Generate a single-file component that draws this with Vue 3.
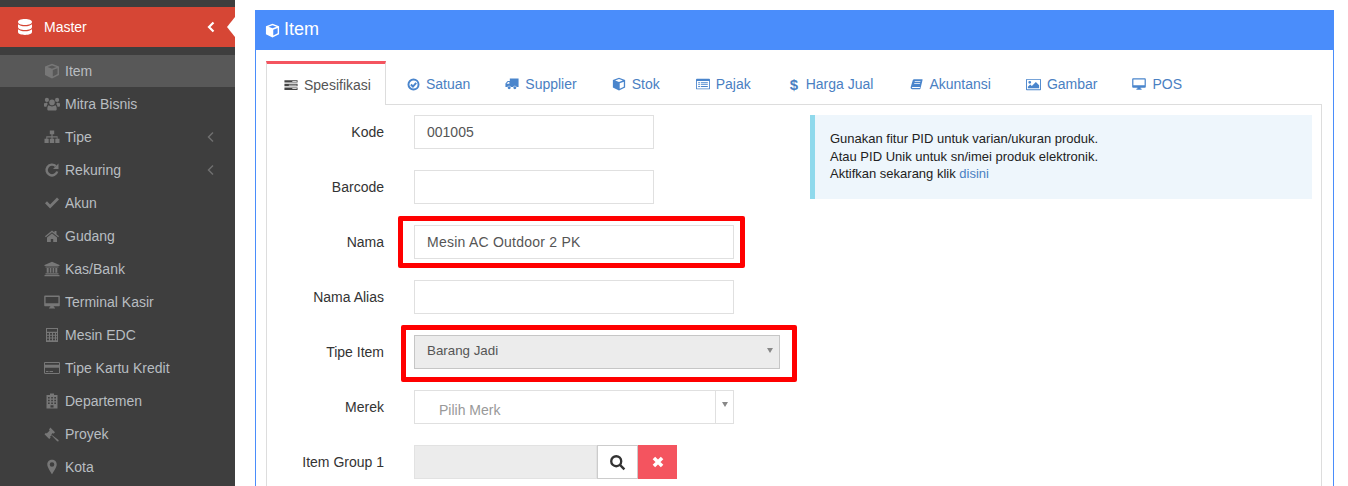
<script setup>
const icons = {
  database: { d: 'M8 .8C4.400.8 1.800 1.800 1.800 3.100S4.400 5.500 8 5.500s6.200-1.100 6.200-2.400S11.600.8 8 .8zM1.800 5v2.200C1.800 8.500 4.400 9.600 8 9.600s6.200-1.100 6.200-2.400V5C13 6 10.700 6.600 8 6.600S3 6 1.800 5zM1.800 9v2.200c0 1.300 2.600 2.300 6.200 2.300s6.200-1 6.200-2.300V9C13 10 10.700 10.600 8 10.600S3 10 1.800 9z' },
  cube: { d: 'M8 .8 15 3.400V12L8 15.400 1 12V3.400zM8 2.400 3.600 4 8 5.700 12.400 4zM8.800 7.100v6.300L13.500 11V5.300z' },
  users: { d: 'M8 3.600a2.800 2.800 0 1 0 0 5.600 2.800 2.800 0 0 0 0-5.600zM2.900 1.800a2.100 2.100 0 1 0 0 4.200 2.100 2.100 0 0 0 0-4.200zM13.100 1.800a2.100 2.100 0 1 0 0 4.200 2.100 2.100 0 0 0 0-4.200zM4.800 9.300C3.800 9.800 3.300 11 3.300 13c0 1 .6 1.500 1.500 1.500h6.400c.9 0 1.500-.5 1.500-1.500 0-2-.5-3.200-1.500-3.700-.9.800-2 1.100-3.200 1.100s-2.300-.3-3.200-1.100zM0 7.200v2.500c0 .7.500 1.100 1.200 1.100h1.300c.1-1.200.6-2.300 1.300-2.800-.4-.4-.7-.9-.9-1.500-.8.600-2.000.6-2.900.7zM16 7.200v2.500c0 .7-.5 1.100-1.200 1.100h-1.300c-.1-1.200-.6-2.300-1.300-2.800.4-.4.7-.9.900-1.500.8.600 2 .6 2.900.7z' },
  sitemap: { d: 'M5.800 1.500h4.400v3.800H8.600v2h5v2.400H15.500V14h-4.200V9.700h1.400V8.500H8.600v1.200H10.200V14H5.800V9.700H7.400V8.500H3.300v1.200H4.700V14H.5V9.700H2.300V7.300H7.400v-2H5.800z' },
  check: { d: 'M1 8.300 3 6.300 6.100 9.400 13 2.600 15 4.600 6.100 13.500z' },
  home: { d: 'M8 2.500 1 8.300l.8 1L8 4.200l6.200 5.100.8-1-2.500-2.100V3h-2v1.500zM3 9.500V14h3.800v-3h2.400v3H13V9.500L8 5.400z' },
  bank: { d: 'M8 .8 15.500 4v1H.5V4zM1.500 5.600h13v.9h-13zM2.700 7h2v4.800h-2zM5.800 7h1.600v4.800H5.800zM8.600 7h1.600v4.800H8.600zM11.300 7h2v4.800h-2zM1.500 12.300h13v1.100h-13zM.5 13.900h15v1.300H.5z' },
  desktop: { d: 'M1.200 1.500h13.600c.6 0 1 .4 1 1v8.700c0 .6-.4 1-1 1H9.700l.3 1.300h1v1H5v-1h1l.3-1.300H1.200c-.6 0-1-.4-1-1V2.500c0-.6.4-1 1-1zm.4 1.400v6.400h12.800V2.900z' },
  calc: { d: 'M2 1h12v14H2zM3 2v2.800h10V2zM3 6v1.700h2V6zm3 0v1.700h2V6zm3 0v1.700h2V6zm3 0v1.700h1V6zM3 8.800v1.700h2V8.800zm3 0v1.700h2V8.800zm3 0v1.700h2V8.800zm3 0v1.700h1V8.800zM3 11.600v1.700h2v-1.700zm3 0v1.700h2v-1.700zm3 0v1.700h2v-1.700zm3 0v1.700h1v-1.700z' },
  card: { d: 'M1.200 2h13.600c.7 0 1.200.5 1.200 1.200v9.600c0 .7-.5 1.200-1.200 1.200H1.200C.5 14 0 13.500 0 12.800V3.200C0 2.500.5 2 1.200 2zM1 4.800h14V3.200c0-.1 0-.2-.2-.2H1.200c-.2 0-.2.100-.2.200zM1 7.800v5c0 .1 0 .2.2.2h13.600c.2 0 .2-.1.2-.2v-5zM2 11h2.500v1H2zM5.500 11H9v1H5.500z' },
  building: { d: 'M6 .6h4v1.500h3.500V15.500H2.500V2.100H6zM4 4v1.500h1.700V4zM7.200 4v1.500h1.700V4zM10.300 4v1.500H12V4zM4 6.800v1.500h1.700V6.800zM7.200 6.800v1.500h1.700V6.800zM10.300 6.800v1.500H12V6.800zM4 9.600v1.500h1.700V9.600zM7.200 9.600v1.500h1.700V9.600zM10.300 9.600v1.500H12V9.600zM6.500 12.300v2.300h3v-2.300z' },
  gavel: { d: 'M6.300 1.500 11 6.200l-1.500 1.500-.7-.7L7.300 8.500l6.900 5.200c.6.500.6 1.200.2 1.600-.4.400-1.100.3-1.500-.2L7.500 9.200 6 10.700l.7.700-1.500 1.500L.5 8.200 2 6.700l.7.7 3-3-.7-.7z' },
  marker: { d: 'M8 .7C5.200.7 3.300 2.800 3.300 5.400 3.300 8.200 6.800 13 8 15.300 9.200 13 12.700 8.200 12.700 5.400 12.700 2.800 10.800.7 8 .7zM8 3.200a2.300 2.300 0 1 1 0 4.600 2.300 2.300 0 0 1 0-4.600z' },
  server: { d: 'M.5 2.500h15v2.700H.5zM9.500 3.400v.9h5v-.9zM.5 6.700h15v2.700H.5zM5.500 7.600v.9h9v-.9zM.5 10.900h15v2.700H.5zM9.500 11.800v.9h5v-.9z' },
  truck: { d: 'M5.500 1.800h10v9.700h-2.300a2 2 0 0 0-3.900 0H6.700a2 2 0 0 0-3.900 0H.5V7.300L3 4.700h2.500zM1.800 7.700h3.200V5.800H3.500zM4.750 10.500a1.700 1.700 0 1 1 0 3.400 1.700 1.700 0 0 1 0-3.400zM11.250 10.500a1.700 1.700 0 1 1 0 3.400 1.700 1.700 0 0 1 0-3.400z' },
  list: { d: 'M1 2h14c.6 0 1 .4 1 1v10c0 .6-.4 1-1 1H1c-.6 0-1-.4-1-1V3c0-.6.4-1 1-1zm0 2.500V13h14V4.500zM2.500 6h2v1h-2zM5.500 6h8v1h-8zM2.500 8.200h2v1h-2zM5.500 8.200h8v1h-8zM2.500 10.400h2v1h-2zM5.500 10.400h8v1h-8z' },
  book: { d: 'M5 1.500h10c.4 0 .6.4.5.800L13 12.500c-.2.7-.6 1.200-1.500 1.200H2.600C1.500 13.700.5 13 .8 11.500L3.500 2.500C3.700 1.900 4.300 1.500 5 1.500zM5.800 4v1h7V4zM5.200 6.200v1h7v-1zM3 11c-.7 0-.8 1.400.1 1.400h8.600c.4 0 .6-.2.7-.6l.2-.8z' },
  image: { d: 'M.8 2h14.400c.4 0 .8.400.8.800v10.400c0 .4-.4.800-.8.800H.8c-.4 0-.8-.4-.8-.8V2.800C0 2.400.4 2 .8 2zM1 3v10h14V3zM4 4.200a1.500 1.500 0 1 1 0 3 1.500 1.500 0 0 1 0-3zM2 12V10.500L4.500 8l1.700 1.700 4.300-4.500 3.500 3.500V12z' },
}

const menu = [
  { label: 'Item', icon: 'cube', active: true },
  { label: 'Mitra Bisnis', icon: 'users' },
  { label: 'Tipe', icon: 'sitemap', arrow: true },
  { label: 'Rekuring', icon: 'repeat', arrow: true },
  { label: 'Akun', icon: 'check' },
  { label: 'Gudang', icon: 'home' },
  { label: 'Kas/Bank', icon: 'bank' },
  { label: 'Terminal Kasir', icon: 'desktop' },
  { label: 'Mesin EDC', icon: 'calc' },
  { label: 'Tipe Kartu Kredit', icon: 'card' },
  { label: 'Departemen', icon: 'building' },
  { label: 'Proyek', icon: 'gavel' },
  { label: 'Kota', icon: 'marker' },
]

const tabs = [
  { label: 'Spesifikasi', icon: 'server', w: 14, ml: 0, active: true },
  { label: 'Satuan', icon: 'circleCheck', w: 13, ml: 0 },
  { label: 'Supplier', icon: 'truck', w: 14, ml: -1 },
  { label: 'Stok', icon: 'cube', w: 14, ml: -1 },
  { label: 'Pajak', icon: 'list', w: 14, ml: 0 },
  { label: 'Harga Jual', icon: 'dollar', w: 10, ml: 3 },
  { label: 'Akuntansi', icon: 'book', w: 13, ml: 1 },
  { label: 'Gambar', icon: 'image', w: 15, ml: -1 },
  { label: 'POS', icon: 'desktop', w: 14, ml: -1 },
]
</script>

<template>
  <div class="page">
    <aside class="sidebar">
      <div class="master">
        <svg class="master-icon" viewBox="1.800 0.800 12.400 12.700" width="14" height="16" preserveAspectRatio="none"><path :d="icons.database.d" fill-rule="evenodd" /></svg>
        <span class="master-label">Master</span>
        <svg class="chev chev-white" viewBox="0 0 8 12" width="8" height="12"><path d="M6.500 1.500 2 6l4.500 4.500" /></svg>
        <span class="notch"></span>
      </div>
      <ul class="menu">
        <li v-for="m in menu" :key="m.label" class="menu-row" :class="{ active: m.active }">
          <span class="menu-icon">
            <svg v-if="m.icon === 'repeat'" viewBox="0 0 16 16" width="16" height="16">
              <path class="ln" d="M13.200 9.500A5.400 5.400 0 1 1 11.800 4.200" />
              <path class="fl" d="M14.500 1.500V7H9z" />
            </svg>
            <svg v-else viewBox="0 0 16 16" width="16" height="16"><path class="fl" :d="icons[m.icon].d" fill-rule="evenodd" /></svg>
          </span>
          <span class="menu-label">{{ m.label }}</span>
          <svg v-if="m.arrow" class="chev chev-grey" viewBox="0 0 8 12" width="8" height="12"><path d="M6 1.500 1.500 6 6 10.500" /></svg>
        </li>
      </ul>
    </aside>

    <main class="main">
      <section class="panel">
        <header class="panel-head">
          <svg viewBox="0 0 16 16" width="15" height="15"><path :d="icons.cube.d" fill-rule="evenodd" /></svg>
          <h1>Item</h1>
        </header>
        <div class="panel-body">
          <nav class="tabs">
            <div v-for="t in tabs" :key="t.label" class="tab" :class="{ active: t.active }" :style="{ marginLeft: t.ml + 'px' }">
              <span v-if="t.icon === 'dollar'" class="dollar">$</span>
              <svg v-else-if="t.icon === 'circleCheck'" viewBox="0 0 16 16" :width="t.w" :height="t.w">
                <circle class="ln" cx="8" cy="8" r="6.200" />
                <path class="ln" d="M4.800 8 7.300 10.500 11.300 6" />
              </svg>
              <svg v-else viewBox="0 0 16 16" :width="t.w" :height="t.w"><path class="fl" :d="icons[t.icon].d" fill-rule="evenodd" /></svg>
              <span>{{ t.label }}</span>
            </div>
          </nav>
          <div class="tab-content">
            <form class="form">
              <div class="row">
                <label>Kode</label>
                <div class="field w240">001005</div>
              </div>
              <div class="row">
                <label>Barcode</label>
                <div class="field w240"></div>
              </div>
              <div class="row">
                <label>Nama</label>
                <div class="field w320 wide-text">Mesin AC Outdoor 2 PK</div>
                <span class="mark mark-nama"></span>
              </div>
              <div class="row">
                <label>Nama Alias</label>
                <div class="field w320"></div>
              </div>
              <div class="row">
                <label>Tipe Item</label>
                <div class="field select">
                  <span>Barang Jadi</span>
                  <i class="caret"></i>
                </div>
                <span class="mark mark-tipe"></span>
              </div>
              <div class="row">
                <label>Merek</label>
                <div class="field w320 combo">
                  <span class="placeholder">Pilih Merk</span>
                  <span class="combo-btn"><i class="caret"></i></span>
                </div>
              </div>
              <div class="row">
                <label>Item Group 1</label>
                <div class="group">
                  <div class="group-input"></div>
                  <button type="button" class="btn-search">
                    <svg viewBox="0 0 16 16" width="17" height="17"><circle cx="6.800" cy="6.800" r="4.700" /><path d="M10.300 10.300 14.500 14.500" /></svg>
                  </button>
                  <button type="button" class="btn-clear">
                    <svg viewBox="0 0 12 12" width="14" height="14"><path d="M2.500 2.500l7 7M9.500 2.500l-7 7" /></svg>
                  </button>
                </div>
              </div>
            </form>
            <aside class="info">
              <p>Gunakan fitur PID untuk varian/ukuran produk.</p>
              <p>Atau PID Unik untuk sn/imei produk elektronik.</p>
              <p>Aktifkan sekarang klik <a>disini</a></p>
            </aside>
          </div>
        </div>
      </section>
    </main>
  </div>
</template>

<style>
html, body { margin: 0; overflow: hidden; background: #fff; }
</style>

<style scoped>
* { box-sizing: border-box; }
.page {
  display: flex;
  width: 1348px;
  height: 486px;
  overflow: hidden;
  font-family: "Liberation Sans", Arial, sans-serif;
  font-size: 14px;
  color: #333;
}

/* sidebar */
.sidebar {
  flex: 0 0 235px;
  background: #3e3e3e;
  padding-top: 7px;
}
.master {
  position: relative;
  display: flex;
  align-items: center;
  height: 40px;
  padding-left: 18px;
  background: #d64635;
  color: #fff;
}
.master-icon { fill: #fff; }
.master-label { margin-left: 12px; }
.chev { margin-left: auto; fill: none; }
.chev-white { margin-right: 20px; stroke: #fff; stroke-width: 2.200; }
.chev-grey { margin-right: 20px; stroke: #6f6f6f; stroke-width: 1.500; }
.notch {
  position: absolute;
  right: 0;
  top: 10px;
  border-style: solid;
  border-width: 10px 8px 10px 0;
  border-color: transparent #fff transparent transparent;
}
.menu { list-style: none; margin: 8px 0 0; padding: 0; }
.menu-row {
  display: flex;
  align-items: center;
  height: 32px;
  margin-bottom: 1px;
  padding-left: 44px;
  color: #b8bdc1;
}
.menu-row.active { background: #585858; }
.menu-icon {
  display: flex;
  align-items: center;
  justify-content: center;
  width: 16px;
  margin-right: 5px;
}
.menu-icon .fl { fill: #777; }
.menu-icon .ln { fill: none; stroke: #777; stroke-width: 2.400; }

/* panel */
.main { flex: 1; padding: 10px 14px 0 20px; min-width: 0; }
.panel {
  height: 520px;
  border: 1px solid #4a8dfb;
  border-top: 0;
  border-bottom: 0;
}
.panel-head {
  display: flex;
  align-items: center;
  height: 40px;
  margin: 0 -1px;
  padding: 0 0 2px 10px;
  background: #4a8dfb;
  color: #fff;
}
.panel-head svg { fill: #fff; margin-top: 3px; margin-right: 4px; }
.panel-head h1 { margin: 0; font-size: 18px; font-weight: 400; }
.panel-body { padding: 11px 11px 0 10px; }

/* tabs */
.tabs { display: flex; height: 43px; }
.tab {
  display: flex;
  align-items: center;
  gap: 6px;
  height: 43px;
  padding: 3px 18px 0;
  color: #4a80c2;
}
.tab .fl { fill: #4a85cc; }
.tab .ln { fill: none; stroke: #4a85cc; stroke-width: 2.400; }
.tab.active {
  position: relative;
  z-index: 1;
  height: 44px;
  margin-right: 3px;
  padding: 0 14px 0 17px;
  background: #fff;
  color: #555;
  border: 1px solid #ddd;
  border-top: 3px solid #f4545f;
  border-bottom: 0;
}
.tab.active .fl { fill: #444; }
.dollar { width: 10px; font-weight: 700; font-size: 15px; }
.tab-content {
  display: flex;
  height: 400px;
  padding-top: 10px;
  border: 1px solid #ddd;
}

/* form */
.form { flex: 0 0 543px; }
.row {
  position: relative;
  display: flex;
  align-items: center;
  height: 34px;
  margin-bottom: 21px;
}
.row label {
  flex: 0 0 117px;
  margin-right: 30px;
  text-align: right;
  color: #333;
}
.field {
  height: 34px;
  padding: 0 12px;
  border: 1px solid #e0e0e0;
  background: #fff;
  line-height: 32px;
  color: #555;
}
.wide-text { letter-spacing: .24px; }
.w240 { width: 240px; }
.w320 { width: 320px; }
.select {
  display: flex;
  align-items: center;
  justify-content: space-between;
  width: 366px;
  padding-right: 6px;
  background: #ececec;
  border-color: #c6c6c6;
  font-size: 13.330px;
  line-height: 30px;
}
.select span { margin-top: -3px; }
.caret {
  display: inline-block;
  border-style: solid;
  border-width: 5px 3.500px 0;
  border-color: #888 transparent transparent;
}
.select .caret { margin-top: -4px; }
.combo {
  position: relative;
  padding: 0 0 0 24px;
  display: flex;
  justify-content: space-between;
}
.placeholder { color: #999; margin-top: 3px; }
.combo-btn {
  display: flex;
  justify-content: center;
  width: 18px;
  border-left: 1px solid #e0e0e0;
  padding-top: 11px;
}
.combo-btn .caret { align-self: flex-start; }
.group { display: flex; height: 34px; }
.group-input {
  width: 183px;
  background: #ececec;
  border: 1px solid #e2e2e2;
}
.group button { height: 34px; padding: 0; display: flex; align-items: center; justify-content: center; }
.btn-search {
  width: 41px;
  background: #fff;
  border: 1px solid #ccc;
}
.btn-search svg { fill: none; stroke: #333; stroke-width: 2.200; }
.btn-clear { width: 39px; background: #f4545f; border: 0; }
.btn-clear svg { fill: none; stroke: #fff; stroke-width: 3; }

.mark {
  position: absolute;
  border: 5px solid #f00;
  border-radius: 2px;
  pointer-events: none;
}
.mark-nama { left: 131px; top: -9px; width: 347px; height: 52px; }
.mark-tipe { left: 134px; top: -10px; width: 396px; height: 57px; }

/* info */
.info {
  flex: 0 0 502px;
  height: 84px;
  padding: 15px 15px;
  background: #eef6fc;
  border-left: 5px solid #8fd9ec;
  font-size: 13px;
  line-height: 17.500px;
  color: #222;
}
.info p { margin: 0; }
.info a { color: #4a80c2; }
</style>
